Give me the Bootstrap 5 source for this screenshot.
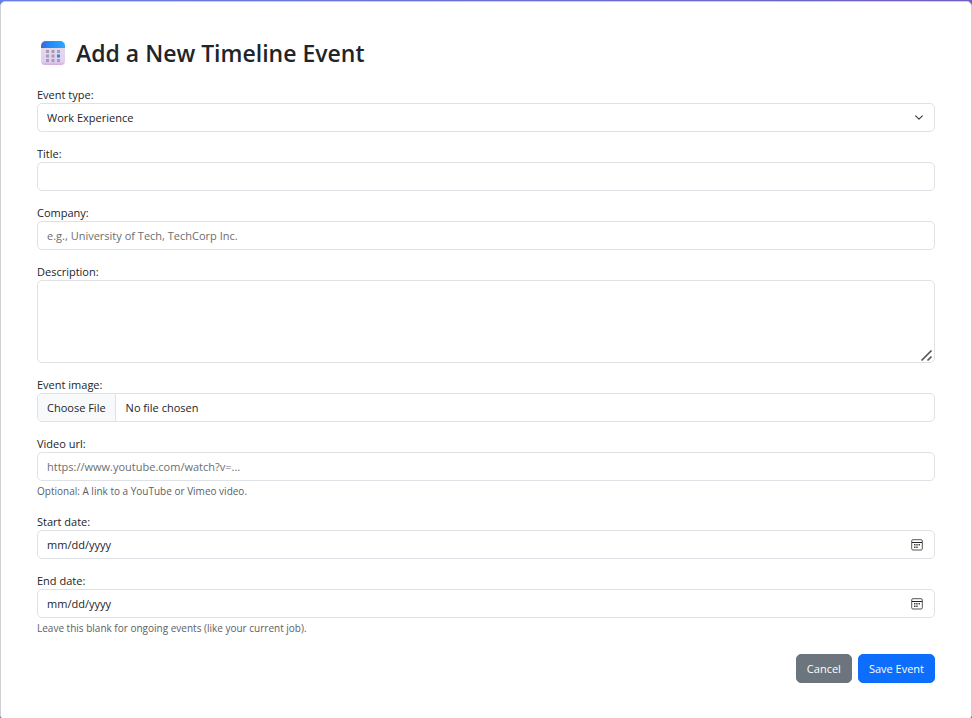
<!DOCTYPE html>
<html lang="en">
<head>
<meta charset="utf-8">
<meta name="viewport" content="width=device-width, initial-scale=1">
<title>Add a New Timeline Event</title>
<link href="https://cdn.jsdelivr.net/npm/bootstrap@5.3.0/dist/css/bootstrap.min.css" rel="stylesheet">
<style>
  body {
    font-family: "Segoe UI", "Open Sans", "Noto Sans", sans-serif;
    font-size: 11px;
    line-height: 17px;
    padding-top: 1px;
    background: linear-gradient(135deg, #667eea 0%, #764ba2 100%);
  }
  .event-card { border: 1px solid #ced0d3; border-radius: 5px; }
  .event-card > .card-body { padding: 36px; }
  .event-title { font-size: 23px; line-height: 30px; font-weight: 600; gap: 10px; margin-bottom: 18px; }
  .event-title svg { margin-left: 3px; }
  .field { margin-bottom: 13px; }
  .field label { display: block; }
  .field .form-control, .field .form-select {
    font-size: 11px;
    line-height: 19px;
    min-height: 29px;
    padding: 4px 9px;
    border-color: #dee2e6;
    border-radius: 5px;
  }
  .field .form-select { background-size: 12px 9px; background-position: right 9px center; }
  .field textarea.form-control { height: 83px; }
  .field textarea::-webkit-resizer {
    background: url("data:image/svg+xml,%3Csvg xmlns='http://www.w3.org/2000/svg' width='15' height='15'%3E%3Cpath d='M2.5 13.5l10-10M8.5 13.5l4-4' stroke='%23555' stroke-width='1.7'/%3E%3C/svg%3E") no-repeat right bottom;
  }
  .field .form-control::file-selector-button { padding: 4px 9px; margin: -4px 10px -4px -9px; background: #f8f9fa; }
  .field .form-control::placeholder { color: #6b6e71; }
  .field input::-webkit-calendar-picker-indicator {
    width: 12px;
    height: 12px;
    padding: 0;
    margin-right: 2px;
    background: url("data:image/svg+xml,%3Csvg xmlns='http://www.w3.org/2000/svg' viewBox='0 0 12 12'%3E%3Crect x='.7' y='.7' width='10.6' height='10.3' rx='1.2' fill='none' stroke='%23555'/%3E%3Cpath d='M1 3.5h10' stroke='%23222'/%3E%3Cpath d='M3 5h1.5v1.5H3zM5.2 5h1.5v1.5H5.2zM7.5 5H9v1.5H7.5zM3 7.5h1.5V9H3zM5.2 7.5h1.5V9H5.2z' fill='%23444'/%3E%3C/svg%3E") center / 12px 12px no-repeat;
  }
  .field .form-text { font-size: 10px; line-height: 16px; margin-top: 2px; padding-bottom: 1px; color: #5c6064; }
  .actions { gap: 6px; padding-top: 4px; }
  .actions .btn { font-size: 11px; line-height: 19px; padding: 4px 10px; border-radius: 5px; }
</style>
</head>
<body class="min-vh-100 d-flex flex-column">
<main class="card event-card flex-grow-1">
  <div class="card-body">
    <h1 class="event-title d-flex align-items-center">
      <svg width="26" height="26" viewBox="0 0 26 26" aria-hidden="true">
        <defs>
          <linearGradient id="page" x1="0" y1="0" x2="0" y2="1"><stop offset="0" stop-color="#e4dcef"/><stop offset=".85" stop-color="#e2d0ee"/><stop offset="1" stop-color="#d0aee2"/></linearGradient>
          <linearGradient id="band" x1="0" y1="0" x2="1" y2="0"><stop offset="0" stop-color="#3f63d6"/><stop offset=".35" stop-color="#2489f5"/><stop offset="1" stop-color="#2ca8ff"/></linearGradient>
        </defs>
        <rect x="1" y="1" width="24" height="24" rx="4" fill="url(#page)"/>
        <path d="M1 8V6a5 5 0 0 1 5-5h14a5 5 0 0 1 5 5v2z" fill="url(#band)"/>
        <path d="M6 10h3v3H6zM11.500 10h3v3h-3zM17 10h3v3h-3zM6 14.500h3v3H6zM11.500 14.500h3v3h-3zM6 19h3v3H6zM11.500 19h3v3h-3zM17 19h3v3h-3z" fill="#a69db3"/>
        <path d="M17 14.500h3v3h-3z" fill="#2489ed"/>
      </svg>
      Add a New Timeline Event
    </h1>
    <form>
      <div class="field">
        <label for="type">Event type:</label>
        <select class="form-select" id="type"><option>Work Experience</option><option>Education</option></select>
      </div>
      <div class="field">
        <label for="title">Title:</label>
        <input class="form-control" type="text" id="title">
      </div>
      <div class="field">
        <label for="company">Company:</label>
        <input class="form-control" type="text" id="company" placeholder="e.g., University of Tech, TechCorp Inc.">
      </div>
      <div class="field">
        <label for="description">Description:</label>
        <textarea class="form-control" id="description"></textarea>
      </div>
      <div class="field">
        <label for="image">Event image:</label>
        <input class="form-control" type="file" id="image">
      </div>
      <div class="field">
        <label for="video">Video url:</label>
        <input class="form-control" type="url" id="video" placeholder="https://www.youtube.com/watch?v=...">
        <div class="form-text">Optional: A link to a YouTube or Vimeo video.</div>
      </div>
      <div class="field">
        <label for="start">Start date:</label>
        <input class="form-control" type="date" id="start">
      </div>
      <div class="field">
        <label for="end">End date:</label>
        <input class="form-control" type="date" id="end">
        <div class="form-text">Leave this blank for ongoing events (like your current job).</div>
      </div>
      <div class="actions d-flex justify-content-end">
        <button type="button" class="btn btn-secondary">Cancel</button>
        <button type="submit" class="btn btn-primary">Save Event</button>
      </div>
    </form>
  </div>
</main>
<script src="https://cdn.jsdelivr.net/npm/bootstrap@5.3.0/dist/js/bootstrap.bundle.min.js"></script>
</body>
</html>
